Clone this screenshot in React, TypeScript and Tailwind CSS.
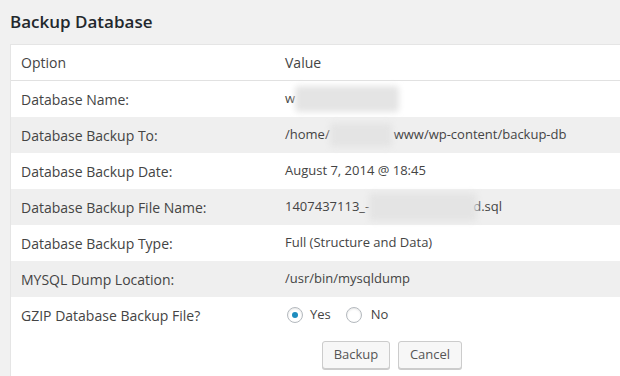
import React from "react";

const Blur = ({ w, h = 24 }: { w: number; h?: number }) => (
  <span
    className="inline-block align-middle bg-[#e4e4e4] blur-[3px] rounded-sm shrink-0"
    style={{ width: w, height: h }}
  />
);

const rows: { label: string; value: React.ReactNode }[] = [
  {
    label: "Database Name:",
    value: (
      <span className="flex items-center">
        w<Blur w={104} h={26} />
      </span>
    ),
  },
  {
    label: "Database Backup To:",
    value: (
      <span className="flex items-center">
        /home/<Blur w={62} />
        <span className="ml-[2px]">www/wp-content/backup-db</span>
      </span>
    ),
  },
  { label: "Database Backup Date:", value: "August 7, 2014 @ 18:45" },
  {
    label: "Database Backup File Name:",
    value: (
      <span className="flex items-center">
        1407437113_-<Blur w={108} h={28} />
        <span className="-ml-[4px]">d.sql</span>
      </span>
    ),
  },
  { label: "Database Backup Type:", value: "Full (Structure and Data)" },
  { label: "MYSQL Dump Location:", value: "/usr/bin/mysqldump" },
];

const Radio = ({ checked }: { checked?: boolean }) => (
  <span className="inline-flex w-4 h-4 rounded-full border border-[#b4b9be] bg-white items-center justify-center shadow-[inset_0_1px_2px_rgba(0,0,0,0.1)]">
    {checked && <span className="w-[6px] h-[6px] rounded-full bg-[#1e8cbe]" />}
  </span>
);

export default function App() {
  return (
    <div
      className="w-[620px] h-[376px] bg-[#f1f1f1] overflow-hidden text-[#444]"
      style={{ fontFamily: "'Open Sans', sans-serif" }}
    >
      <h2 className="pl-[10px] pt-[10px] h-[44px] text-[17px] font-semibold text-[#23282d] leading-[24px]">
        Backup Database
      </h2>
      <div className="ml-[10px] bg-white border border-[#e5e5e5] border-r-0 text-[14px]">
        <div className="grid grid-cols-[264px_1fr] h-[36px] items-center border-b border-[#e1e1e1]">
          <div className="pl-[10px]">Option</div>
          <div className="pl-[10px]">Value</div>
        </div>
        {rows.map((r, i) => (
          <div
            key={r.label}
            className={`grid grid-cols-[264px_1fr] h-[36px] items-center ${
              i % 2 === 1 ? "bg-[#efefef]" : "bg-white"
            }`}
          >
            <div className="pl-[10px] whitespace-nowrap">{r.label}</div>
            <div className="pl-[10px] text-[13px] whitespace-nowrap">{r.value}</div>
          </div>
        ))}
        <div className="grid grid-cols-[264px_1fr] h-[36px] items-center">
          <div className="pl-[10px]">GZIP Database Backup File?</div>
          <div className="pl-[10px] text-[13px] flex items-center">
            <span className="ml-[2px] flex">
              <Radio checked />
            </span>
            <span className="ml-[7px]">Yes</span>
            <span className="ml-[15px] flex">
              <Radio />
            </span>
            <span className="ml-[9px]">No</span>
          </div>
        </div>
        <div className="flex justify-start gap-[8px] pt-[8px] pb-[10px] pl-[311px]">
          <button className="h-[28px] w-[68px] text-[13px] rounded-[3px] border border-[#cccccc] bg-[#f7f7f7] text-[#555] shadow-[0_1px_0_#ccc]">
            Backup
          </button>
          <button className="h-[28px] w-[64px] text-[13px] rounded-[3px] border border-[#cccccc] bg-[#f7f7f7] text-[#555] shadow-[0_1px_0_#ccc]">
            Cancel
          </button>
        </div>
      </div>
    </div>
  );
}
